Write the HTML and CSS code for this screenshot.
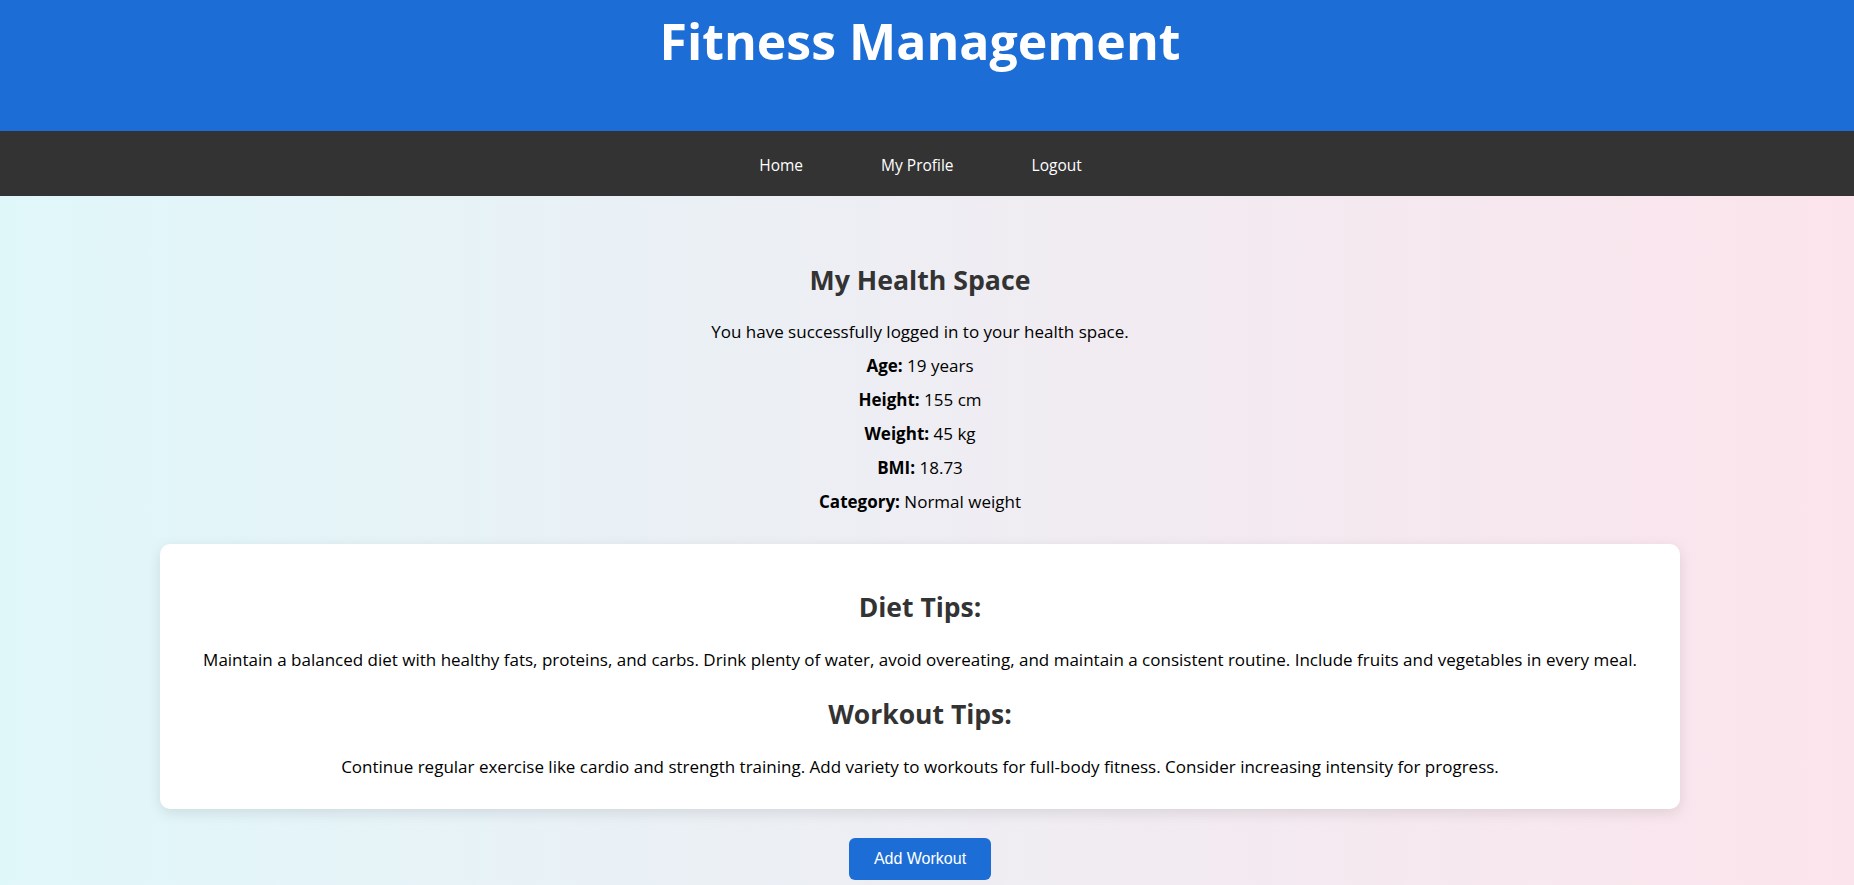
FILE: index.html
```html
<!DOCTYPE html>
<html lang="en">
<head>
<meta charset="utf-8">
<title>Fitness Management</title>
<link rel="stylesheet" href="styles.css">
</head>
<body>
<header class="site-header">
  <h1 class="site-title">Fitness Management</h1>
</header>
<nav class="site-nav">
  <a class="nav-link" href="#">Home</a>
  <a class="nav-link" href="#">My Profile</a>
  <a class="nav-link" href="#">Logout</a>
</nav>
<main class="content">
  <section class="summary">
    <h2 class="summary-title">My Health Space</h2>
    <p class="line">You have successfully logged in to your health space.</p>
    <p class="line"><strong>Age:</strong> 19 years</p>
    <p class="line"><strong>Height:</strong> 155 cm</p>
    <p class="line"><strong>Weight:</strong> 45 kg</p>
    <p class="line"><strong>BMI:</strong> 18.73</p>
    <p class="line"><strong>Category:</strong> Normal weight</p>
  </section>
  <section class="tips-card">
    <h3 class="tips-title">Diet Tips:</h3>
    <p class="tips-text">Maintain a balanced diet with healthy fats, proteins, and carbs. Drink plenty of water, avoid overeating, and maintain a consistent routine. Include fruits and vegetables in every meal.</p>
    <h3 class="tips-title">Workout Tips:</h3>
    <p class="tips-text">Continue regular exercise like cardio and strength training. Add variety to workouts for full-body fitness. Consider increasing intensity for progress.</p>
  </section>
  <div class="actions">
    <button class="btn" type="button">Add Workout</button>
  </div>
</main>
</body>
</html>
```

FILE: styles.css
```css
* { box-sizing: border-box; }

html, body {
  margin: 0;
  padding: 0;
}

body {
  font-family: "Open Sans", "Noto Sans", sans-serif;
  background: linear-gradient(to right, #e0f7fa, #fce4ec);
  min-height: 100vh;
  display: flex;
  flex-direction: column;
  overflow: hidden;
}

.site-header {
  background: #1c6ed6;
  height: 131px;
  padding: 7px 14px 0 0;
  text-align: center;
}

.site-title {
  margin: 0;
  color: #fff;
  font-size: 50px;
  font-weight: 700;
  line-height: normal;
}

.site-nav {
  background: #333333;
  height: 65px;
  display: flex;
  justify-content: center;
  align-items: center;
  gap: 78px;
  padding: 2px 13px 0 0;
}

.nav-link {
  color: #fff;
  text-decoration: none;
  font-size: 15.5px;
}

.content {
  flex: 1;
  padding: 68px 14px 0 0;
  display: flex;
  flex-direction: column;
  align-items: center;
}

.summary {
  text-align: center;
}

.summary-title {
  margin: 0 0 24px;
  font-size: 26.7px;
  line-height: 32px;
  color: #333;
  font-weight: 700;
}

.line {
  margin: 0 0 10px;
  font-size: 17px;
  line-height: 24px;
  color: #000;
}

.line strong {
  font-weight: 700;
}

.tips-card {
  align-self: stretch;
  margin: 20px 160px 29px;
  background: #fff;
  border-radius: 10px;
  box-shadow: 0 4px 14px rgba(0, 0, 0, 0.1);
  padding: 47px 40px 30px;
  text-align: center;
}

.tips-title {
  margin: 0 0 25px;
  font-size: 26.5px;
  line-height: 32px;
  color: #333;
  font-weight: 700;
}

.tips-text {
  margin: 0 0 26px;
  font-size: 17px;
  line-height: 24px;
  color: #000;
}

.tips-text:last-child {
  margin-bottom: 0;
}

.actions {
  display: flex;
  justify-content: center;
}

.btn {
  background: #1c6ed6;
  color: #fff;
  border: none;
  border-radius: 6px;
  font-family: "Liberation Sans", Arial, sans-serif;
  font-size: 16px;
  line-height: 20px;
  padding: 11px 25px;
  cursor: pointer;
}
```
